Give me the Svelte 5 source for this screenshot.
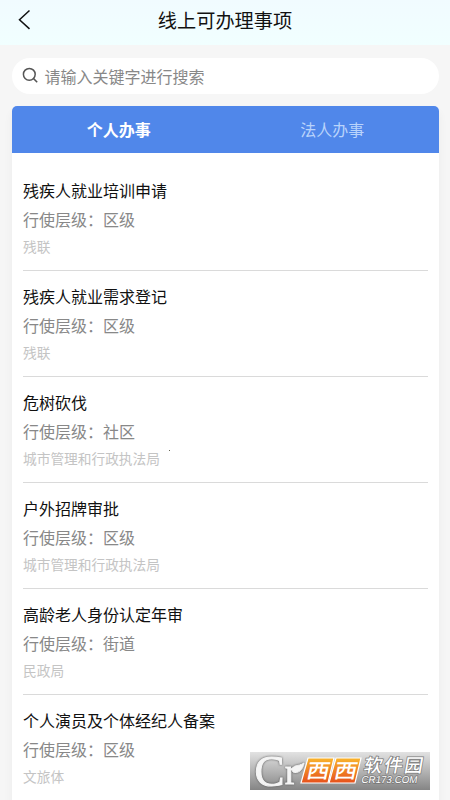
<script lang="ts">
  const tabs = ["个人办事", "法人办事"];

  const items = [
    { title: "残疾人就业培训申请", level: "区级", dept: "残联" },
    { title: "残疾人就业需求登记", level: "区级", dept: "残联" },
    { title: "危树砍伐", level: "社区", dept: "城市管理和行政执法局" },
    { title: "户外招牌审批", level: "区级", dept: "城市管理和行政执法局" },
    { title: "高龄老人身份认定年审", level: "街道", dept: "民政局" },
    { title: "个人演员及个体经纪人备案", level: "区级", dept: "文旅体" },
  ];

  let active = $state(0);
</script>

<div class="page">
  <header class="navbar">
    <button class="back" aria-label="返回">
      <svg width="14" height="22" viewBox="0 0 14 22" fill="none">
        <path d="M11.5 1.5 1.5 10.7l10 9.2" stroke="#111" stroke-width="1.5" />
      </svg>
    </button>
    <h1>线上可办理事项</h1>
  </header>

  <div class="search">
    <svg width="17" height="17" viewBox="0 0 17 17" fill="none" stroke="#555" stroke-width="1.5">
      <circle cx="7.3" cy="7.3" r="5.9" />
      <path d="m11.6 11.6 3.6 3.6" />
    </svg>
    <span>请输入关键字进行搜索</span>
  </div>

  <main class="card">
    <div class="tabs">
      {#each tabs as tab, i}
        <button class="tab" class:active={active === i} onclick={() => (active = i)}>{tab}</button>
      {/each}
    </div>
    <ul class="list">
      {#each items as item}
        <li>
          <div class="title">{item.title}</div>
          <div class="level">行使层级：{item.level}</div>
          <div class="dept">{item.dept}</div>
        </li>
      {/each}
    </ul>
  </main>

  <i class="speck"></i>

  <svg class="watermark" width="180" height="38" viewBox="0 0 180 38">
    <defs>
      <linearGradient id="bar" x1="0" y1="0" x2="0" y2="1">
        <stop offset="0" stop-color="#e2e2e2" />
        <stop offset="0.5" stop-color="#b4b4b4" />
        <stop offset="1" stop-color="#858585" />
      </linearGradient>
      <linearGradient id="orange" x1="0" y1="0" x2="0" y2="1">
        <stop offset="0" stop-color="#f9b52c" />
        <stop offset="1" stop-color="#e6501c" />
      </linearGradient>
    </defs>
    <rect width="180" height="38" fill="url(#bar)" />
    <g class="emblem">
      <text x="4.5" y="33.5" font-size="45">C</text>
      <text x="35" y="32" font-size="36">r</text>
      <path d="M42 18c1-6 6-3 12-7-1 7-6 11-11 9Z" />
    </g>
    <g fill="url(#orange)" stroke="#fff" stroke-width="1.2">
      <path d="M58 6h26l-6 25H51Z" />
      <path d="M86 6h25l-6 25H79Z" />
    </g>
    <g class="tile">
      <text transform="translate(55.5 25.5) skewX(-12) scale(1.15 1)">西</text>
      <text transform="translate(83 25.5) skewX(-12) scale(1.15 1)">西</text>
    </g>
    <g class="brand">
      <text transform="translate(113 19.5) skewX(-10)" font-size="18.5" font-weight="500" textLength="59">软件园</text>
      <text transform="translate(111 30.5) skewX(-10)" class="domain" textLength="56" lengthAdjust="spacingAndGlyphs">CR173.COM</text>
    </g>
  </svg>
</div>

<style>
  :global(body) {
    background: #f6f6f6;
    overflow: hidden;
  }

  .page {
    height: 800px;
    position: relative;
    overflow: hidden;
    background: #f6f6f6;
    font-family: "Noto Sans CJK SC", sans-serif;
    color: #111;
  }

  button {
    padding: 0;
    border: none;
    background: none;
    font-family: inherit;
    cursor: pointer;
  }

  .navbar {
    display: grid;
    grid-template-columns: 50px 1fr 50px;
    align-items: center;
    height: 45px;
    padding-bottom: 5px;
    box-sizing: border-box;
    background: linear-gradient(#f1fbff, #f1ffff);
  }

  .back {
    display: flex;
    padding-left: 18px;
  }

  h1 {
    margin: 0;
    font-size: 19.2px;
    line-height: 28px;
    font-weight: 400;
    text-align: center;
  }

  .search {
    display: flex;
    align-items: center;
    gap: 5.5px;
    height: 36px;
    box-sizing: border-box;
    margin: 13px 11px 12px 12px;
    padding: 0 0 1px 10px;
    border-radius: 18px;
    background: #fff;
    color: #888;
    font-size: 16px;
  }

  .card {
    margin: 0 11px 0 12px;
    border-radius: 5px 5px 0 0;
    background: #fff;
    box-shadow: 0 6px 10px rgba(0, 0, 0, 0.05);
  }

  .tabs {
    display: flex;
    height: 47px;
    border-radius: 5px 5px 0 0;
    background: #5087ea;
  }

  .tab {
    flex: 1;
    padding-bottom: 2px;
    color: #b9d3fb;
    font-size: 16px;
  }

  .tab.active {
    color: #fff;
    font-weight: 700;
  }

  .list {
    margin: 0;
    padding: 11.5px 11px 0;
    list-style: none;
  }

  li {
    height: 106.1px;
    box-sizing: border-box;
    padding-top: 11.5px;
    border-bottom: 1px solid #dadada;
  }

  .title,
  .level {
    font-size: 16px;
    line-height: 28.5px;
  }

  .level {
    color: #888;
  }

  .dept {
    color: #c4c4c4;
    font-size: 13.7px;
    line-height: 26.5px;
  }

  .speck {
    position: absolute;
    top: 450px;
    left: 169px;
    width: 1px;
    height: 1px;
    background: #665;
  }

  .watermark {
    position: absolute;
    top: 752px;
    left: 250px;
    overflow: visible;
  }

  .emblem {
    font-family: "Liberation Serif", serif;
    fill: #f5f5f5;
    stroke: #f5f5f5;
    stroke-width: 1px;
    filter: drop-shadow(0 0 0.8px #555);
  }

  .tile text {
    font-size: 20px;
    font-weight: 500;
    fill: #fff;
  }

  .brand text {
    fill: #fff;
    stroke: #777;
    stroke-width: 1.4px;
    paint-order: stroke;
  }

  .domain {
    font-family: "Liberation Sans", sans-serif;
    font-size: 10px;
  }
</style>
